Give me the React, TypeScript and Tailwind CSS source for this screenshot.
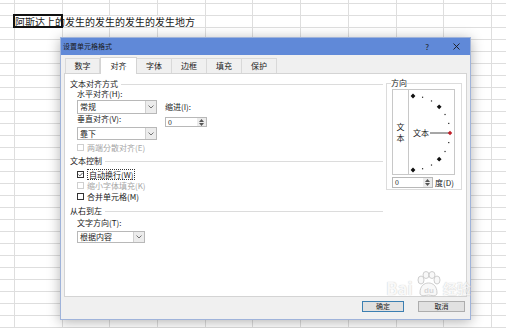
import React from 'react';

const ROWS = 28;
const COLS = 11;

const Chevron: React.FC = () => (
  <svg width="6" height="4" viewBox="0 0 6 4">
    <path d="M0.5 0.5 L3 3 L5.5 0.5" fill="none" stroke="#666" strokeWidth="0.9" />
  </svg>
);

const Combo: React.FC<{ value: string; className: string }> = ({ value, className }) => (
  <div className={`flex items-stretch border border-[#b8b8b8] bg-white ${className}`}>
    <div className="flex flex-1 items-center pl-[2px] text-[8px] leading-none text-[#222]">{value}</div>
    <div className="flex w-[11px] items-center justify-center border-l border-[#d0d0d0] bg-[#ececec]">
      <Chevron />
    </div>
  </div>
);

const Spin: React.FC<{ className: string }> = ({ className }) => (
  <div className={`flex items-stretch border border-[#b8b8b8] bg-white ${className}`}>
    <div className="flex flex-1 items-center pl-[2px] text-[7px] leading-none text-[#222]">0</div>
    <div className="flex w-[9px] flex-col items-center justify-center gap-[1px] bg-[#ececec]">
      <svg width="5" height="3" viewBox="0 0 5 3">
        <path d="M0 3 L2.5 0 L5 3 Z" fill="#555" />
      </svg>
      <svg width="5" height="3" viewBox="0 0 5 3">
        <path d="M0 0 L2.5 3 L5 0 Z" fill="#555" />
      </svg>
    </div>
  </div>
);

const Check: React.FC<{ label: string; checked?: boolean; disabled?: boolean; focus?: boolean }> = ({
  label,
  checked,
  disabled,
  focus,
}) => (
  <div className="flex h-[10px] items-center gap-[3px] pl-[7px]">
    <span
      className={`flex h-[7px] w-[7px] items-center justify-center border bg-white ${
        disabled ? 'border-[#cfcfcf]' : 'border-[#333]'
      }`}
    >
      {checked && (
        <svg width="6" height="5" viewBox="0 0 6 5">
          <path d="M0.5 2.5 L2.2 4.2 L5.5 0.6" fill="none" stroke="#222" strokeWidth="0.9" />
        </svg>
      )}
    </span>
    <span
      className={`text-[8px] leading-[9px] ${disabled ? 'text-[#a6a6a6]' : 'text-[#222]'} ${
        focus ? 'border border-dotted border-[#333] px-[1px]' : ''
      }`}
    >
      {label}
    </span>
  </div>
);

const Section: React.FC<{ label: string }> = ({ label }) => (
  <div className="flex h-[10px] items-center gap-[3px]">
    <span className="text-[8px] leading-none text-[#222]">{label}</span>
    <span className="h-px flex-1 bg-[#dcdcdc]" />
  </div>
);

const Dial: React.FC = () => {
  const cx = 4;
  const cy = 43;
  const r = 37;
  const dots = [-90, -75, -60, -45, -30, -15, 15, 30, 45, 60, 75, 90];
  return (
    <svg width="45" height="86" viewBox="0 0 45 86">
      {dots.map((a) => {
        const rad = (a * Math.PI) / 180;
        const x = cx + r * Math.cos(rad);
        const y = cy + r * Math.sin(rad);
        const big = a % 45 === 0;
        return big ? (
          <rect key={a} x={x - 1.7} y={y - 1.7} width="3.4" height="3.4" fill="#111" transform={`rotate(45 ${x} ${y})`} />
        ) : (
          <rect key={a} x={x - 0.6} y={y - 0.6} width="1.2" height="1.2" fill="#222" />
        );
      })}
      <text x="4" y="46" fontSize="8" fill="#222" fontFamily="'Noto Sans CJK SC', sans-serif">
        文本
      </text>
      <line x1="21" y1="43" x2="40" y2="43" stroke="#222" strokeWidth="0.8" />
      <rect x="39.4" y="41.4" width="3.2" height="3.2" fill="#c0202a" transform="rotate(45 41 43)" />
    </svg>
  );
};

const tabs = ['数字', '对齐', '字体', '边框', '填充', '保护'];

export default function App() {
  return (
    <div className="relative h-[328px] w-[506px] overflow-hidden bg-white font-['Noto_Sans_CJK_SC',sans-serif]">
      {/* spreadsheet grid */}
      <div className="flex flex-col">
        {Array.from({ length: ROWS }).map((_, r) => (
          <div key={r} className={`flex ${r === 0 ? 'h-[4px]' : 'h-[12px]'}`}>
            <div className="w-[15px] shrink-0 border-b border-r border-[#dedede]" />
            {Array.from({ length: COLS }).map((__, c) => (
              <div key={c} className="w-[47.7px] shrink-0 border-b border-r border-[#dedede]" />
            ))}
          </div>
        ))}
      </div>

      {/* cell text + selection */}
      <div className="absolute left-[15px] top-[16px] whitespace-nowrap bg-white text-[10px] leading-[11px] text-[#1a1a1a]">
        阿斯达上的发生的发生的发生的发生地方
      </div>
      <div className="absolute left-[13px] top-[14px] h-[14px] w-[50px] border-2 border-[#111]" />

      {/* dialog */}
      <div className="absolute left-[60px] top-[37px] flex h-[283px] w-[411px] flex-col border border-[#9fb3da] bg-[#f0f0f0] shadow-[0_2px_12px_rgba(0,0,0,0.3)]">
        <div className="flex h-[17px] shrink-0 items-center bg-[#6089d8] pl-[2px] pr-[10px]">
          <span className="text-[7px] leading-none text-[#1a1a1a]">设置单元格格式</span>
          <span className="ml-auto mr-[24px] text-[8px] leading-none text-[#1a1a1a]">?</span>
          <svg width="7" height="7" viewBox="0 0 7 7">
            <path d="M0.5 0.5 L6.5 6.5 M6.5 0.5 L0.5 6.5" stroke="#1a1a1a" strokeWidth="0.9" />
          </svg>
        </div>

        <div className="flex flex-1 flex-col px-[3px]">
          {/* tabs */}
          <div className="flex h-[18px] items-end pl-[1px]">
            {tabs.map((t, i) =>
              i === 1 ? (
                <div
                  key={t}
                  className="relative z-10 -mb-px flex h-[17px] w-[37px] items-center justify-center border border-b-0 border-[#d4d4d4] bg-white text-[8px] leading-none text-[#222]"
                >
                  {t}
                </div>
              ) : (
                <div
                  key={t}
                  className="flex h-[15px] w-[35px] items-center justify-center border border-b-0 border-l-0 border-[#d9d9d9] text-[8px] leading-none text-[#222] first:border-l"
                >
                  {t}
                </div>
              )
            )}
          </div>

          {/* panel */}
          <div className="flex h-[224px] border border-[#d4d4d4] bg-white">
            <div className="flex w-[318px] flex-col pl-[5px] pt-[5px]">
              <Section label="文本对齐方式" />
              <div className="flex pl-[7px]">
                <div className="flex w-[80px] flex-col">
                  <div className="flex h-[10px] items-center text-[8px] leading-none text-[#222]">水平对齐(H):</div>
                  <Combo value="常规" className="mt-[1px] h-[14px]" />
                  <div className="flex h-[10px] items-center text-[8px] leading-none text-[#222]">垂直对齐(V):</div>
                  <Combo value="靠下" className="mt-[3px] h-[13px]" />
                </div>
                <div className="ml-[8px] flex w-[42px] flex-col">
                  <div className="mt-[13px] flex h-[10px] items-center text-[8px] leading-none text-[#222]">缩进(I):</div>
                  <Spin className="mt-[5px] h-[10px]" />
                </div>
              </div>
              <div className="mt-[2px]">
                <Check label="两端分散对齐(E)" disabled />
              </div>
              <div className="mt-[4px]">
                <Section label="文本控制" />
              </div>
              <div className="mt-[3px] flex flex-col gap-[1px]">
                <Check label="自动换行(W)" checked focus />
                <Check label="缩小字体填充(K)" disabled />
                <Check label="合并单元格(M)" />
              </div>
              <div className="mt-[5px]">
                <Section label="从右到左" />
              </div>
              <div className="mt-[2px] flex h-[10px] items-center pl-[7px] text-[8px] leading-none text-[#222]">
                文字方向(T):
              </div>
              <div className="mt-[3px] pl-[7px]">
                <Combo value="根据内容" className="h-[12px] w-[68px]" />
              </div>
            </div>

            <fieldset className="ml-[3px] mt-[4px] h-[112px] w-[75px] border border-[#dcdcdc] pl-[5px] pr-[6px]">
              <legend className="-ml-[1px] text-[8px] leading-[10px] text-[#222]">方向</legend>
              <div className="mt-[1px] flex h-[86px]">
                <div className="flex w-[17px] flex-col items-center justify-center border border-[#c8c8c8] text-[8px] leading-[11px] text-[#222]">
                  <span>文</span>
                  <span>本</span>
                </div>
                <div className="w-[46px] border border-l-0 border-[#c8c8c8]">
                  <Dial />
                </div>
              </div>
              <div className="mt-[2px] flex h-[11px] items-center gap-[2px]">
                <Spin className="h-[11px] w-[41px]" />
                <span className="text-[8px] leading-none text-[#222]">度(D)</span>
              </div>
            </fieldset>
          </div>

          {/* footer */}
          <div className="flex justify-end gap-[14px] pr-[2px] pt-[4px]">
            <button className="flex h-[11px] w-[42px] items-center justify-center border border-[#3c7fb1] bg-[#e1e1e1] text-[7px] leading-none text-[#222]">
              确定
            </button>
            <button className="flex h-[11px] w-[47px] items-center justify-center border border-[#adadad] bg-[#e1e1e1] text-[7px] leading-none text-[#222]">
              取消
            </button>
          </div>
        </div>
      </div>

      {/* watermark */}
      <div className="pointer-events-none absolute left-[386px] top-[271px] flex items-end gap-[1px] opacity-60">
        <span className="text-[17px] font-bold leading-[18px] text-[#f4f4f4] [text-shadow:0_0_1px_#999]">Bai</span>
        <svg width="28" height="26" viewBox="0 0 28 26">
          <g fill="#f4f4f4" stroke="#9a9a9a" strokeWidth="0.8">
            <ellipse cx="7" cy="9" rx="3" ry="4" />
            <ellipse cx="12" cy="4" rx="3" ry="3.5" />
            <ellipse cx="18" cy="4" rx="3" ry="3.5" />
            <ellipse cx="23" cy="9" rx="3" ry="4" />
            <path d="M6 22 C6 15 10 12 14.5 12 C19 12 23 15 23 22 C23 25 20 25 14.5 24 C9 25 6 25 6 22 Z" />
          </g>
          <text x="10" y="22" fontSize="8" fontWeight="bold" fill="#bbb" fontFamily="Arial, sans-serif">du</text>
        </svg>
        <span className="text-[14px] font-bold leading-[17px] text-[#f4f4f4] [text-shadow:0_0_1px_#999]">经验</span>
      </div>
    </div>
  );
}
